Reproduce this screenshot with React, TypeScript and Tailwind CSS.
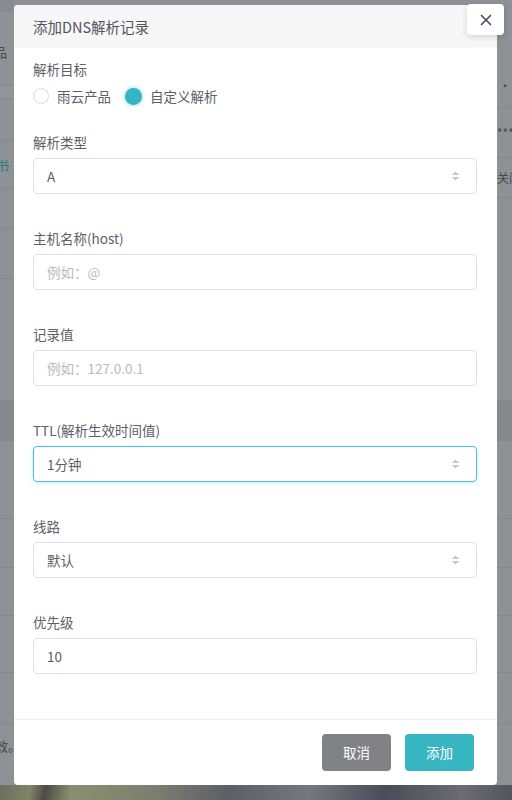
import { X } from "lucide-react"

const font = { fontFamily: '"Noto Sans CJK SC", "Noto Sans", sans-serif' }

function SelectArrow() {
    return (
        <svg width="9" height="10" viewBox="0 0 9 10" className="shrink-0">
            <path d="M4.5 0.5 L8.5 4 H0.5 Z" fill="#c6c8ce" />
            <path d="M4.5 9.5 L8.5 6 H0.5 Z" fill="#c6c8ce" />
        </svg>
    )
}

function Field({ label, value, placeholder, select, focused }: { label: string; value?: string; placeholder?: string; select?: boolean; focused?: boolean }) {
    return (
        <div className="mt-[34px] first:mt-0">
            <div className="h-[20px] leading-[20px] text-[13.5px] text-[#5c5f68]">{label}</div>
            <div
                className={`mt-[6px] h-[36px] rounded-[4px] border flex items-center justify-between pl-[13px] pr-[16px] text-[13.5px] ${
                    focused ? "border-[#4cc2ce] shadow-[0_1px_4px_rgba(54,181,193,0.25)]" : "border-[#dfe1e6]"
                }`}
            >
                {value ? <span className="text-[#5a5d66]">{value}</span> : <span className="text-[#b7bac1]">{placeholder}</span>}
                {select && <SelectArrow />}
            </div>
        </div>
    )
}

export default function App() {
    return (
        <div className="relative w-[512px] h-[800px] overflow-hidden bg-[#8e9195]" style={font}>
            {/* background page behind the overlay */}
            <div className="flex flex-col h-full">
                <div className="flex flex-1 justify-between">
                    {/* left strip */}
                    <div className="w-[14px] flex flex-col text-[13px] text-[#45484d] overflow-hidden">
                        <div className="h-[10px] bg-[#888b8f]" />
                        <div className="h-[75px] border-t border-[#83868a] flex items-center pt-[8px] -ml-[6px]">品</div>
                        <div className="h-[13px] border-t border-[#83868a] bg-[#92959a]" />
                        <div className="h-[42px] border-t border-[#83868a]" />
                        <div className="h-[48px] border-t border-[#83868a] flex items-center -ml-[4px] text-[#2c7c83]">书</div>
                        <div className="h-[40px] border-t border-[#83868a]" />
                        <div className="h-[50px] border-t border-[#83868a]" />
                        <div className="h-[122px] border-t border-[#83868a]" />
                        <div className="h-[40px] bg-[#85888c]" />
                        <div className="h-[78px] border-t border-[#83868a]" />
                        <div className="h-[49px] border-t border-[#83868a]" />
                        <div className="h-[48px] border-t border-[#83868a]" />
                        <div className="h-[57px] border-t border-[#83868a]" />
                        <div className="h-[51px] border-t border-[#83868a]" />
                        <div className="flex-1 border-t border-[#83868a] flex items-start pt-[12px] -ml-[5px] whitespace-nowrap">效。</div>
                    </div>
                    {/* right strip */}
                    <div className="w-[15px] flex flex-col text-[12px] text-[#45484d] overflow-hidden whitespace-nowrap">
                        <div className="h-[107px] flex items-end pb-[12px] pl-[2px] tracking-[1px]">···</div>
                        <div className="h-[50px] border-t border-[#83868a] flex items-center">***</div>
                        <div className="h-[40px] border-t border-[#83868a] flex items-center">关闭</div>
                        <div className="h-[203px] border-t border-[#83868a]" />
                        <div className="h-[40px] bg-[#85888c]" />
                        <div className="h-[78px] border-t border-[#83868a]" />
                        <div className="h-[49px] border-t border-[#83868a]" />
                        <div className="h-[48px] border-t border-[#83868a]" />
                        <div className="h-[57px] border-t border-[#83868a]" />
                        <div className="h-[51px] border-t border-[#83868a]" />
                        <div className="flex-1 border-t border-[#83868a]" />
                    </div>
                </div>
                <div className="h-[15px] bg-[linear-gradient(100deg,#6c6e62_0%,#7f8566_6%,#4c4b45_9%,#8a8f6f_14%,#7c7f70_30%,#5d5e66_45%,#77787f_60%,#4b4c58_75%,#6c6b74_90%,#54545e_100%)]" />
            </div>

            {/* modal */}
            <div className="absolute left-[14px] top-[5px] w-[483px] h-[780px] bg-white rounded-[4px] flex flex-col">
                <div className="h-[43px] bg-[#f7f7f8] rounded-t-[4px] px-[19px] flex items-center text-[14.5px] text-[#53525f]">
                    添加DNS解析记录
                </div>
                <div className="flex-1 pl-[19px] pr-[20px] pt-[11px]">
                    <div className="h-[20px] leading-[20px] text-[13.5px] text-[#5c5f68]">解析目标</div>
                    <div className="mt-[7px] h-[20px] flex items-center text-[13.5px] text-[#5c5f68]">
                        <span className="w-[16px] h-[16px] rounded-full border border-[#dcdee3] bg-white" />
                        <span className="ml-[8px]">雨云产品</span>
                        <span className="ml-[14px] w-[17px] h-[17px] rounded-full bg-[#35b5c1] shadow-[0_0_4px_rgba(53,181,193,0.6)]" />
                        <span className="ml-[8px]">自定义解析</span>
                    </div>
                    <div className="mt-[26px]">
                        <Field label="解析类型" value="A" select />
                        <Field label="主机名称(host)" placeholder="例如：@" />
                        <Field label="记录值" placeholder="例如：127.0.0.1" />
                        <Field label="TTL(解析生效时间值)" value="1分钟" select focused />
                        <Field label="线路" value="默认" select />
                        <Field label="优先级" value="10" />
                    </div>
                </div>
                <div className="h-[66px] border-t border-[#eeeef0] flex items-start justify-end gap-[14px] pt-[14px] pr-[23px]">
                    <button className="w-[69px] h-[37px] rounded-[4px] bg-[#808285] text-white text-[13.5px]">取消</button>
                    <button className="w-[69px] h-[37px] rounded-[4px] bg-[#37b5c1] text-white text-[13.5px]">添加</button>
                </div>
            </div>

            {/* close button */}
            <button className="absolute left-[467px] top-[4px] w-[37px] h-[31px] rounded-[4px] bg-white shadow-[0_2px_6px_rgba(0,0,0,0.15)] flex items-center justify-center">
                <X className="w-[18px] h-[18px] text-[#4d4c66]" strokeWidth={2.2} />
            </button>
        </div>
    )
}
